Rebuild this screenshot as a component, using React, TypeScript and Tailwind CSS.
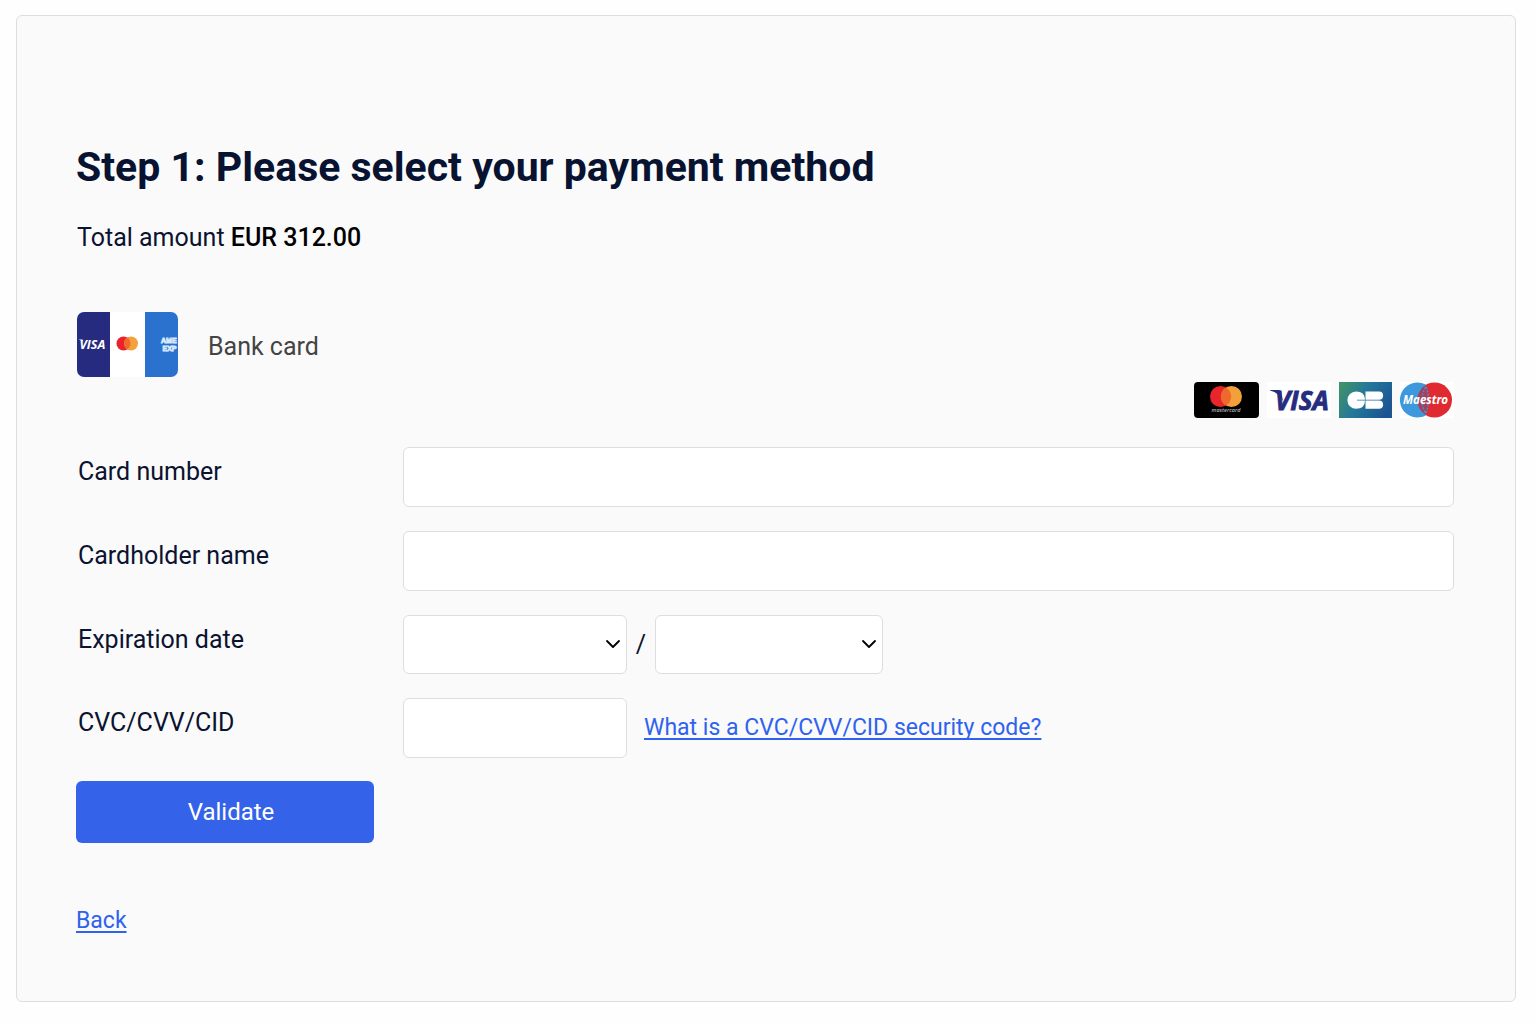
import React from 'react';
import clsx from 'clsx';

const months = ['01', '02', '03', '04', '05', '06', '07', '08', '09', '10', '11', '12'];
const years = ['2025', '2026', '2027', '2028', '2029', '2030', '2031', '2032'];

const fieldClass = 'w-full rounded-md border border-[#dedede] bg-white px-4 text-[#0b1330] outline-none focus:border-[#3463ea]';
const linkClass = 'text-[23px] text-[#2f62ee] underline decoration-2 underline-offset-3 [text-decoration-skip-ink:none]';

const BankCardIcon = () => (
  <svg viewBox="0 0 102 66" className="h-[66px] w-[102px] shrink-0" aria-hidden="true">
    <defs>
      <clipPath id="bank-card-shape">
        <rect x="1" width="101" height="65" rx="7" />
      </clipPath>
    </defs>
    <g clipPath="url(#bank-card-shape)">
      <rect width="102" height="66" fill="#fff" />
      <rect width="34" height="66" fill="#272b80" />
      <rect x="69" width="33" height="66" fill="#2b72cf" />
      <path d="M2.5 27.5h4l1 2z" fill="#fff" />
      <text x="3.5" y="36.5" fontFamily="Open Sans, sans-serif" fontSize="12.5" fontWeight="700" fontStyle="italic" fill="#fff">VISA</text>
      <circle cx="47.5" cy="31.5" r="7" fill="#e9222b" />
      <circle cx="55" cy="31.5" r="7" fill="#f4a03c" />
      <path d="M51.250 25.6a7 7 0 0 1 0 11.8a7 7 0 0 1 0-11.8z" fill="#ee6a30" />
      <g fontFamily="Liberation Sans, sans-serif" fontSize="7" fontWeight="700" fill="#2b72cf" stroke="#d9e9fb" strokeWidth="0.9">
        <text x="85" y="31">AME</text>
        <text x="86.5" y="39">EXP</text>
      </g>
    </g>
  </svg>
);

const MastercardLogo = () => (
  <svg viewBox="0 0 65 36" className="h-9 w-[65px]" role="img" aria-label="Mastercard">
    <rect width="65" height="36" rx="4" fill="#000" />
    <circle cx="26.5" cy="14.5" r="10.5" fill="#e8252b" />
    <circle cx="37.5" cy="14.5" r="10.5" fill="#f3a03a" />
    <path d="M32 5.5a10.5 10.5 0 0 1 0 18a10.5 10.5 0 0 1 0-18z" fill="#ed6a2c" />
    <text x="32" y="30" textAnchor="middle" fontFamily="Open Sans, sans-serif" fontSize="5.5" fontStyle="italic" fontWeight="600" fill="#b5b5b5">mastercard</text>
  </svg>
);

const VisaLogo = () => (
  <svg viewBox="0 0 64 36" className="h-9 w-16" role="img" aria-label="Visa">
    <rect width="64" height="36" fill="#fff" />
    <path d="M3 8h8.500q2 0 2.500 2l2 9q-3.500-8-13-10.500z" fill="#262c7e" />
    <text x="8" y="28" fontFamily="Open Sans, sans-serif" fontSize="26" fontWeight="700" fontStyle="italic" fill="#262c7e" stroke="#262c7e" strokeWidth="0.8">VISA</text>
  </svg>
);

const CbLogo = () => (
  <svg viewBox="0 0 53 36" className="h-9 w-[53px]" role="img" aria-label="CB">
    <defs>
      <linearGradient id="cb-fill" x1="0" y1="0.2" x2="1" y2="0.6">
        <stop offset="0" stopColor="#3f9168" />
        <stop offset="0.45" stopColor="#23789a" />
        <stop offset="1" stopColor="#1d5592" />
      </linearGradient>
    </defs>
    <rect width="53" height="36" fill="url(#cb-fill)" />
    <path d="M26 17.8Q26 9.6 17 9.600a8.600 8.600 0 0 0 0 17.200Q26 26.800 26 18.600H18V17.800z" fill="#fff" />
    <path d="M26.500 9.600H40a4 4 0 0 1 0 8.200H26.500zM26.500 18.600H40a4 4 0 0 1 0 8.200H26.500z" fill="#fff" />
  </svg>
);

const MaestroLogo = () => (
  <svg viewBox="0 0 54 36" className="h-9 w-[54px]" role="img" aria-label="Maestro">
    <rect width="54" height="36" fill="#fff" />
    <circle cx="34.500" cy="18" r="17.5" fill="#df2a31" />
    <path d="M25.750 2.600a17.500 17.500 0 1 0 0 30.800q6-15.400 0-30.800z" fill="#3d99dc" />
    <path d="M25.750 3a17.500 17.500 0 0 0 0 30q7-15 0-30z" fill="#a63f5c" />
    <path d="M25.500 5q-7 13 0 26M26 5q5 13 0 26" fill="none" stroke="#4a8dcb" strokeWidth="1.500" strokeDasharray="2 1.500" />
    <text x="25.500" y="22" textAnchor="middle" fontFamily="Open Sans, sans-serif" fontSize="11.5" fontWeight="700" fontStyle="italic" fill="#fff">Maestro</text>
  </svg>
);

interface RowProps {
  id: string;
  label: string;
  children: React.ReactNode;
}

const Row: React.FC<RowProps> = ({ id, label, children }) => (
  <div className="grid grid-cols-[327px_1fr] items-start">
    <label htmlFor={id} className="pt-[9px] pl-0.5">{label}</label>
    {children}
  </div>
);

interface DateSelectProps {
  id: string;
  label: string;
  options: string[];
  className?: string;
}

const DateSelect: React.FC<DateSelectProps> = ({ id, label, options, className }) => (
  <div className={clsx('relative', className)}>
    <select id={id} aria-label={label} defaultValue="" className={clsx(fieldClass, 'block h-[59px] appearance-none')}>
      <option value="" />
      {options.map((option) => (
        <option key={option}>{option}</option>
      ))}
    </select>
    <svg viewBox="0 0 16 10" className="pointer-events-none absolute top-6 right-1.5 h-2.5 w-4" aria-hidden="true">
      <path d="M2 2l6 6l6-6" fill="none" stroke="#000" strokeWidth="1.8" strokeLinecap="round" strokeLinejoin="round" />
    </svg>
  </div>
);

export default function App() {
  return (
    <div className="min-h-screen bg-[#fefefe] px-4 py-[15px] font-['Roboto',sans-serif] text-[25px] leading-8 text-[#0b1330]">
      <main className="mr-1 rounded-md border border-[#dedede] bg-[#fafafa] pt-[127px] pr-[61px] pb-16 pl-[59px]">
        <h1 className="text-[41px] leading-12 font-bold text-[#071330]">Step 1: Please select your payment method</h1>
        <p className="mt-[31px] pl-px">
          Total amount <span className="font-medium text-black">EUR 312.00</span>
        </p>

        <div className="mt-[58px] flex items-center gap-[30px]">
          <BankCardIcon />
          <h2 className="pt-1 text-[#444]">Bank card</h2>
        </div>

        <div className="mt-1 flex items-center justify-end gap-2">
          <MastercardLogo />
          <VisaLogo />
          <CbLogo />
          <MaestroLogo />
        </div>

        <form className="mt-[29px]" onSubmit={(e) => e.preventDefault()}>
          <div className="flex flex-col gap-6">
            <Row id="card-number" label="Card number">
              <input id="card-number" type="text" inputMode="numeric" className={clsx(fieldClass, 'h-[60px]')} />
            </Row>
            <Row id="cardholder" label="Cardholder name">
              <input id="cardholder" type="text" className={clsx(fieldClass, 'h-[60px]')} />
            </Row>
            <Row id="exp-month" label="Expiration date">
              <div className="flex items-center">
                <DateSelect id="exp-month" label="Expiration month" options={months} className="w-56" />
                <span className="w-7 text-center">/</span>
                <DateSelect id="exp-year" label="Expiration year" options={years} className="w-[228px]" />
              </div>
            </Row>
            <Row id="cvc" label="CVC/CVV/CID">
              <div className="flex items-center gap-[17px]">
                <div className="w-56">
                  <input id="cvc" type="text" inputMode="numeric" className={clsx(fieldClass, 'block h-[60px]')} />
                </div>
                <a href="#security-code" className={linkClass}>What is a CVC/CVV/CID security code?</a>
              </div>
            </Row>
          </div>
          <button type="submit" className="mt-[23px] block h-[62px] w-[298px] rounded-md bg-[#3463ea] pl-3 text-2xl text-white">
            Validate
          </button>
        </form>

        <p className="mt-[61px]">
          <a href="#back" className={linkClass}>Back</a>
        </p>
      </main>
    </div>
  );
}
